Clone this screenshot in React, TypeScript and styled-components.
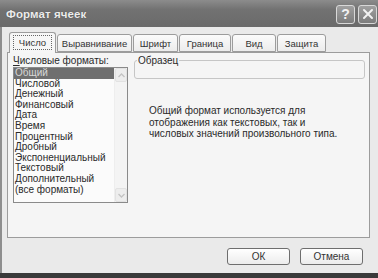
import React from "react";
import styled, { createGlobalStyle } from "styled-components";

const GlobalStyle = createGlobalStyle`
  html, body {
    margin: 0;
    padding: 0;
    background: #e9e9e9;
  }
  body {
    font-family: "Liberation Sans", Arial, sans-serif;
    color: #2a2a2a;
  }
`;

const tabs = [
  { label: "Число", width: 47 },
  { label: "Выравнивание", width: 75 },
  { label: "Шрифт", width: 45 },
  { label: "Граница", width: 52 },
  { label: "Вид", width: 44 },
  { label: "Защита", width: 49 },
];

const formats = [
  "Общий",
  "Числовой",
  "Денежный",
  "Финансовый",
  "Дата",
  "Время",
  "Процентный",
  "Дробный",
  "Экспоненциальный",
  "Текстовый",
  "Дополнительный",
  "(все форматы)",
];

export default function App() {
  return (
    <>
      <GlobalStyle />
      <Window>
        <TitleBar>
          <Title>Формат ячеек</Title>
          <CaptionButton>?</CaptionButton>
          <CaptionButton>
            <svg width="12" height="12" viewBox="0 0 12 12">
              <path d="M2 2 L10 10 M10 2 L2 10" stroke="#f2f2f2" strokeWidth="2" strokeLinecap="round" />
            </svg>
          </CaptionButton>
        </TitleBar>
        <Body>
          <TabRow>
            {tabs.map((t, i) => (
              <Tab key={t.label} $w={t.width} $active={i === 0}>
                {i === 0 ? <Focus>{t.label}</Focus> : t.label}
              </Tab>
            ))}
          </TabRow>
          <Panel>
            <LeftCol>
              <Label>
                <u>Ч</u>исловые форматы:
              </Label>
              <ListBox>
                <Items>
                  {formats.map((f, i) => (
                    <Item key={f} $selected={i === 0}>
                      {f}
                    </Item>
                  ))}
                </Items>
                <ScrollBar>
                  <Arrow>
                    <svg width="7" height="5" viewBox="0 0 7 5">
                      <path d="M0.5 4 L3.5 1 L6.5 4" fill="none" stroke="#c4c4c4" strokeWidth="1.4" />
                    </svg>
                  </Arrow>
                  <Arrow>
                    <svg width="7" height="5" viewBox="0 0 7 5">
                      <path d="M0.5 1 L3.5 4 L6.5 1" fill="none" stroke="#c4c4c4" strokeWidth="1.4" />
                    </svg>
                  </Arrow>
                </ScrollBar>
              </ListBox>
            </LeftCol>
            <RightCol>
              <Sample>
                <legend>Образец</legend>
              </Sample>
              <Description>
                Общий формат используется для
                <br />
                отображения как текстовых, так и
                <br />
                числовых значений произвольного типа.
              </Description>
            </RightCol>
          </Panel>
          <Footer>
            <Button>ОК</Button>
            <Button>Отмена</Button>
          </Footer>
        </Body>
        <BottomEdge />
      </Window>
    </>
  );
}

const Window = styled.div`
  width: 378px;
  height: 278px;
  display: flex;
  flex-direction: column;
  background: #eaeaea;
  overflow: hidden;
`;

const TitleBar = styled.div`
  height: 27px;
  flex-shrink: 0;
  display: flex;
  align-items: center;
  gap: 3px;
  padding: 0 1px 0 6px;
  background: linear-gradient(#8c8c8c 0%, #727272 35%, #6a6a6a 100%);
`;

const Title = styled.div`
  flex: 1;
  color: #ececec;
  font-weight: bold;
  font-size: 11.5px;
  letter-spacing: 0.1px;
  text-shadow: 0 0 1px #444;
`;

const CaptionButton = styled.div`
  width: 17px;
  height: 17px;
  display: flex;
  align-items: center;
  justify-content: center;
  border: 1px solid #d8d8d8;
  border-radius: 3px;
  background: linear-gradient(#a0a0a0, #7c7c7c);
  color: #f2f2f2;
  font-size: 14px;
  font-weight: bold;
  margin-top: 1px;
`;

const Body = styled.div`
  flex: 1;
  display: flex;
  flex-direction: column;
  padding: 5px 8px 0 5px;
  border-left: 2px solid #8e8e8e;
`;

const TabRow = styled.div`
  height: 20px;
  display: flex;
  align-items: flex-end;
  gap: 1px;
  padding-left: 2px;
  position: relative;
  z-index: 1;
`;

const Tab = styled.div<{ $w: number; $active: boolean }>`
  width: ${(p) => p.$w}px;
  height: ${(p) => (p.$active ? 21 : 18)}px;
  margin-bottom: ${(p) => (p.$active ? -1 : 0)}px;
  box-sizing: border-box;
  display: flex;
  align-items: center;
  justify-content: center;
  padding-bottom: ${(p) => (p.$active ? 1 : 0)}px;
  border: 1px solid #9c9c9c;
  border-bottom: ${(p) => (p.$active ? "none" : "1px solid #9c9c9c")};
  border-radius: 3px 3px 0 0;
  background: ${(p) => (p.$active ? "#f6f6f6" : "linear-gradient(#fbfbfb, #ececec)")};
  font-size: 9.5px;
  color: #333;
  white-space: nowrap;
`;

const Focus = styled.span`
  padding: 1px 5px;
  border: 1px dotted #666;
`;

const Panel = styled.div`
  height: 186px;
  box-sizing: border-box;
  display: flex;
  border: 1px solid #9c9c9c;
  background: #f5f5f5;
  padding: 2px 4px 0 5px;
`;

const LeftCol = styled.div`
  width: 115px;
  display: flex;
  flex-direction: column;
`;

const Label = styled.div`
  font-size: 10px;
  line-height: 11px;
  height: 11px;
  margin-bottom: 1px;
`;

const ListBox = styled.div`
  height: 136px;
  box-sizing: border-box;
  display: flex;
  border: 1px solid #8a8a8a;
  background: #fbfbfb;
`;

const Items = styled.div`
  flex: 1;
  display: flex;
  flex-direction: column;
`;

const Item = styled.div<{ $selected: boolean }>`
  height: 10.6px;
  line-height: 10.6px;
  font-size: 10px;
  padding-left: 1px;
  white-space: nowrap;
  background: ${(p) => (p.$selected ? "#6f6f6f" : "transparent")};
  color: ${(p) => (p.$selected ? "#d8d8d8" : "#2a2a2a")};
`;

const ScrollBar = styled.div`
  width: 12px;
  display: flex;
  flex-direction: column;
  justify-content: space-between;
  background: #f4f4f4;
  border-left: 1px solid #eeeeee;
`;

const Arrow = styled.div`
  height: 12px;
  display: flex;
  align-items: center;
  justify-content: center;
  background: #ededed;
  border: 1px solid #e2e2e2;
  border-radius: 2px;
`;

const RightCol = styled.div`
  flex: 1;
  display: flex;
  flex-direction: column;
  padding-left: 6px;
`;

const Sample = styled.fieldset`
  margin: 0;
  padding: 0;
  height: 22px;
  border: 1px solid #c6c6c6;
  border-radius: 3px;

  legend {
    font-size: 10px;
    line-height: 11px;
    padding: 0 1px;
    margin-left: 2px;
  }
`;

const Description = styled.div`
  margin: 26px 0 0 15px;
  font-size: 10px;
  line-height: 11.5px;
`;

const Footer = styled.div`
  display: flex;
  justify-content: flex-end;
  gap: 10px;
  padding: 10px 7px 0 0;
  height: 25px;
  box-sizing: border-box;
`;

const Button = styled.div`
  width: 63px;
  height: 17px;
  box-sizing: border-box;
  display: flex;
  align-items: center;
  justify-content: center;
  border: 1px solid #6e6e6e;
  border-radius: 3px;
  background: linear-gradient(#ffffff, #ececec);
  font-size: 10px;
  color: #333;
`;

const BottomEdge = styled.div`
  height: 5px;
  margin-top: auto;
  background: #3a3a3a;
`;
